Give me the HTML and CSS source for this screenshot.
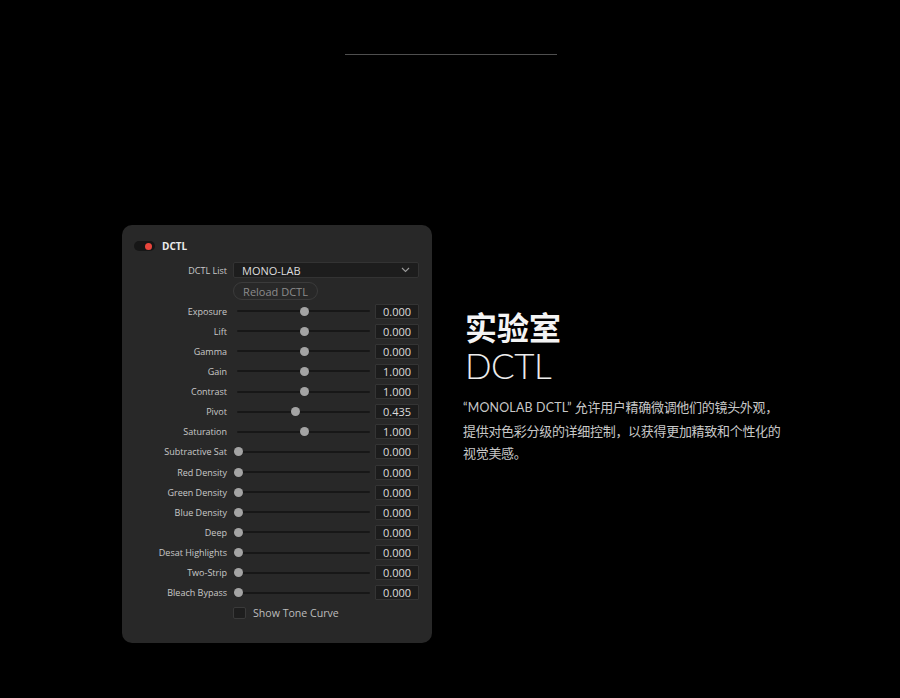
FILE: index.html
```html
<!DOCTYPE html>
<html lang="zh-CN">
<head>
<meta charset="utf-8">
<title>MONOLAB DCTL</title>
<link rel="stylesheet" href="styles.css">
</head>
<body>
<div class="topline"></div>
<main class="main">
  <section class="panel">
    <div class="header">
      <span class="toggle"><span class="dot"></span></span>
      <span class="title">DCTL</span>
    </div>
    <div class="row row-select">
      <span class="label">DCTL List</span>
      <div class="select"><span>MONO-LAB</span>
        <svg class="chev" width="9" height="6" viewBox="0 0 9 6"><path d="M1 1 L4.5 4.5 L8 1" fill="none" stroke="#9a9a9a" stroke-width="1.1"/></svg>
      </div>
    </div>
    <div class="row row-reload">
      <span class="label"></span>
      <div class="cell"><span class="reload">Reload DCTL</span></div>
    </div>
    <div class="sliders">
      <div class="row srow"><span class="label">Exposure</span><div class="slider"><span class="thumb" style="--f:0.5"></span></div><span class="val">0.000</span></div>
      <div class="row srow"><span class="label">Lift</span><div class="slider"><span class="thumb" style="--f:0.5"></span></div><span class="val">0.000</span></div>
      <div class="row srow"><span class="label">Gamma</span><div class="slider"><span class="thumb" style="--f:0.5"></span></div><span class="val">0.000</span></div>
      <div class="row srow"><span class="label">Gain</span><div class="slider"><span class="thumb" style="--f:0.5"></span></div><span class="val">1.000</span></div>
      <div class="row srow"><span class="label">Contrast</span><div class="slider"><span class="thumb" style="--f:0.5"></span></div><span class="val">1.000</span></div>
      <div class="row srow"><span class="label">Pivot</span><div class="slider"><span class="thumb" style="--f:0.435"></span></div><span class="val">0.435</span></div>
      <div class="row srow"><span class="label">Saturation</span><div class="slider"><span class="thumb" style="--f:0.5"></span></div><span class="val">1.000</span></div>
      <div class="row srow"><span class="label">Subtractive Sat</span><div class="slider"><span class="thumb" style="--f:0"></span></div><span class="val">0.000</span></div>
      <div class="row srow"><span class="label">Red Density</span><div class="slider"><span class="thumb" style="--f:0"></span></div><span class="val">0.000</span></div>
      <div class="row srow"><span class="label">Green Density</span><div class="slider"><span class="thumb" style="--f:0"></span></div><span class="val">0.000</span></div>
      <div class="row srow"><span class="label">Blue Density</span><div class="slider"><span class="thumb" style="--f:0"></span></div><span class="val">0.000</span></div>
      <div class="row srow"><span class="label">Deep</span><div class="slider"><span class="thumb" style="--f:0"></span></div><span class="val">0.000</span></div>
      <div class="row srow"><span class="label">Desat Highlights</span><div class="slider"><span class="thumb" style="--f:0"></span></div><span class="val">0.000</span></div>
      <div class="row srow"><span class="label">Two-Strip</span><div class="slider"><span class="thumb" style="--f:0"></span></div><span class="val">0.000</span></div>
      <div class="row srow"><span class="label">Bleach Bypass</span><div class="slider"><span class="thumb" style="--f:0"></span></div><span class="val">0.000</span></div>
    </div>
    <div class="row row-check">
      <span class="label"></span>
      <label class="check"><span class="box"></span><span>Show Tone Curve</span></label>
    </div>
  </section>
  <section class="intro">
    <h1 class="h-cn">实验室</h1>
    <h2 class="h-en">DCTL</h2>
    <p class="desc"><span class="latin">“MONOLAB DCTL”</span> 允许用户精确微调他们的镜头外观，<br>提供对色彩分级的详细控制，以获得更加精致和个性化的<br>视觉美感。</p>
  </section>
</main>
</body>
</html>
```
FILE: styles.css
```css
html, body {
  margin: 0;
  padding: 0;
  background: #000;
}
body {
  width: 900px;
  height: 698px;
  overflow: hidden;
  font-family: "Open Sans", "Noto Sans", "Noto Sans CJK SC", sans-serif;
}
.topline {
  width: 212px;
  height: 1px;
  margin: 54px 0 0 345px;
  background: #4f4f4f;
}
.main {
  display: flex;
  align-items: flex-start;
  gap: 33px;
  margin-top: 170px;
  padding-left: 122px;
}
.panel {
  width: 310px;
  height: 418px;
  box-sizing: border-box;
  background: #282828;
  border-radius: 10px;
  padding: 11px 13px 0 0;
  display: flex;
  flex-direction: column;
}
.header {
  height: 20px;
  display: flex;
  align-items: center;
  padding-left: 12px;
}
.toggle {
  width: 21px;
  height: 10px;
  border-radius: 5px;
  background: #161616;
  position: relative;
}
.dot {
  position: absolute;
  right: 3px;
  top: 1.5px;
  width: 7px;
  height: 7px;
  border-radius: 50%;
  background: #e8453c;
}
.title {
  margin-left: 7px;
  color: #ececec;
  font-size: 10px;
  font-weight: 700;
}
.row {
  display: grid;
  grid-template-columns: 105px 185px;
  column-gap: 7px;
  align-items: center;
}
.label {
  text-align: right;
  color: #c9c9c9;
  font-size: 9px;
  white-space: nowrap;
}
.row-select {
  margin-top: 6px;
  height: 16px;
}
.select {
  height: 16px;
  box-sizing: border-box;
  background: #1d1d1d;
  border: 1px solid #333;
  border-radius: 2px;
  display: flex;
  align-items: center;
  justify-content: space-between;
  padding: 0 8px 0 8px;
  color: #dedede;
  font-size: 11px;
  margin-left: -1px;
  width: 186px;
}
.chev { display: block; }
.row-reload {
  margin-top: 4px;
  height: 18px;
}
.cell {
  display: flex;
  align-items: center;
  height: 18px;
}
.reload {
  display: flex;
  align-items: center;
  justify-content: center;
  width: 85px;
  height: 18px;
  box-sizing: border-box;
  border: 1px solid #3b3b3b;
  border-radius: 9px;
  color: #8c8c8c;
  font-size: 11px;
  margin-left: -1px;
}
.sliders {
  margin-top: 1px;
}
.srow {
  grid-template-columns: 105px 1fr 44px;
  column-gap: 0;
  height: 20.14px;
}
.slider {
  position: relative;
  height: 9px;
  margin: 0 5px 0 7px;
}
.slider::before {
  content: "";
  position: absolute;
  left: 3px;
  right: 0;
  top: 3.5px;
  height: 2px;
  background: #171717;
  border-radius: 1px;
}
.thumb {
  position: absolute;
  top: 0;
  left: calc(var(--f) * (100% - 4px));
  width: 9px;
  height: 9px;
  border-radius: 50%;
  background: #a4a4a4;
}
.val {
  height: 15px;
  box-sizing: border-box;
  background: #1c1c1c;
  border: 1px solid #343434;
  border-radius: 1px;
  color: #dcdcdc;
  font-size: 11px;
  line-height: 13px;
  text-align: center;
}
.row-check {
  height: 20px;
}
.check {
  display: flex;
  align-items: center;
  gap: 7px;
  color: #bdbdbd;
  font-size: 10.6px;
  margin-left: -1px;
}
.box {
  width: 13px;
  height: 12px;
  box-sizing: border-box;
  background: #1e1e1e;
  border: 1px solid #3a3a3a;
  border-radius: 2px;
}
.intro {
  margin-top: 82px;
  color: #fff;
}
.h-cn {
  margin: 0;
  font-family: "Noto Sans CJK SC", sans-serif;
  font-weight: 700;
  font-size: 32px;
  line-height: 38px;
  color: #f4f4f4;
}
.h-en {
  margin: 0;
  font-family: "Lato", sans-serif;
  font-weight: 300;
  font-size: 35px;
  line-height: 40px;
  letter-spacing: -0.5px;
  color: #ececec;
}
.desc {
  margin: 11px 0 0 -2px;
  white-space: nowrap;
  font-family: "Lato", "Noto Sans CJK SC", sans-serif;
  font-size: 13px;
  line-height: 22.5px;
  letter-spacing: -0.3px;
  color: #c8c8c8;
}
.latin {
  font-size: 12.4px;
  letter-spacing: 0.2px;
}
```
